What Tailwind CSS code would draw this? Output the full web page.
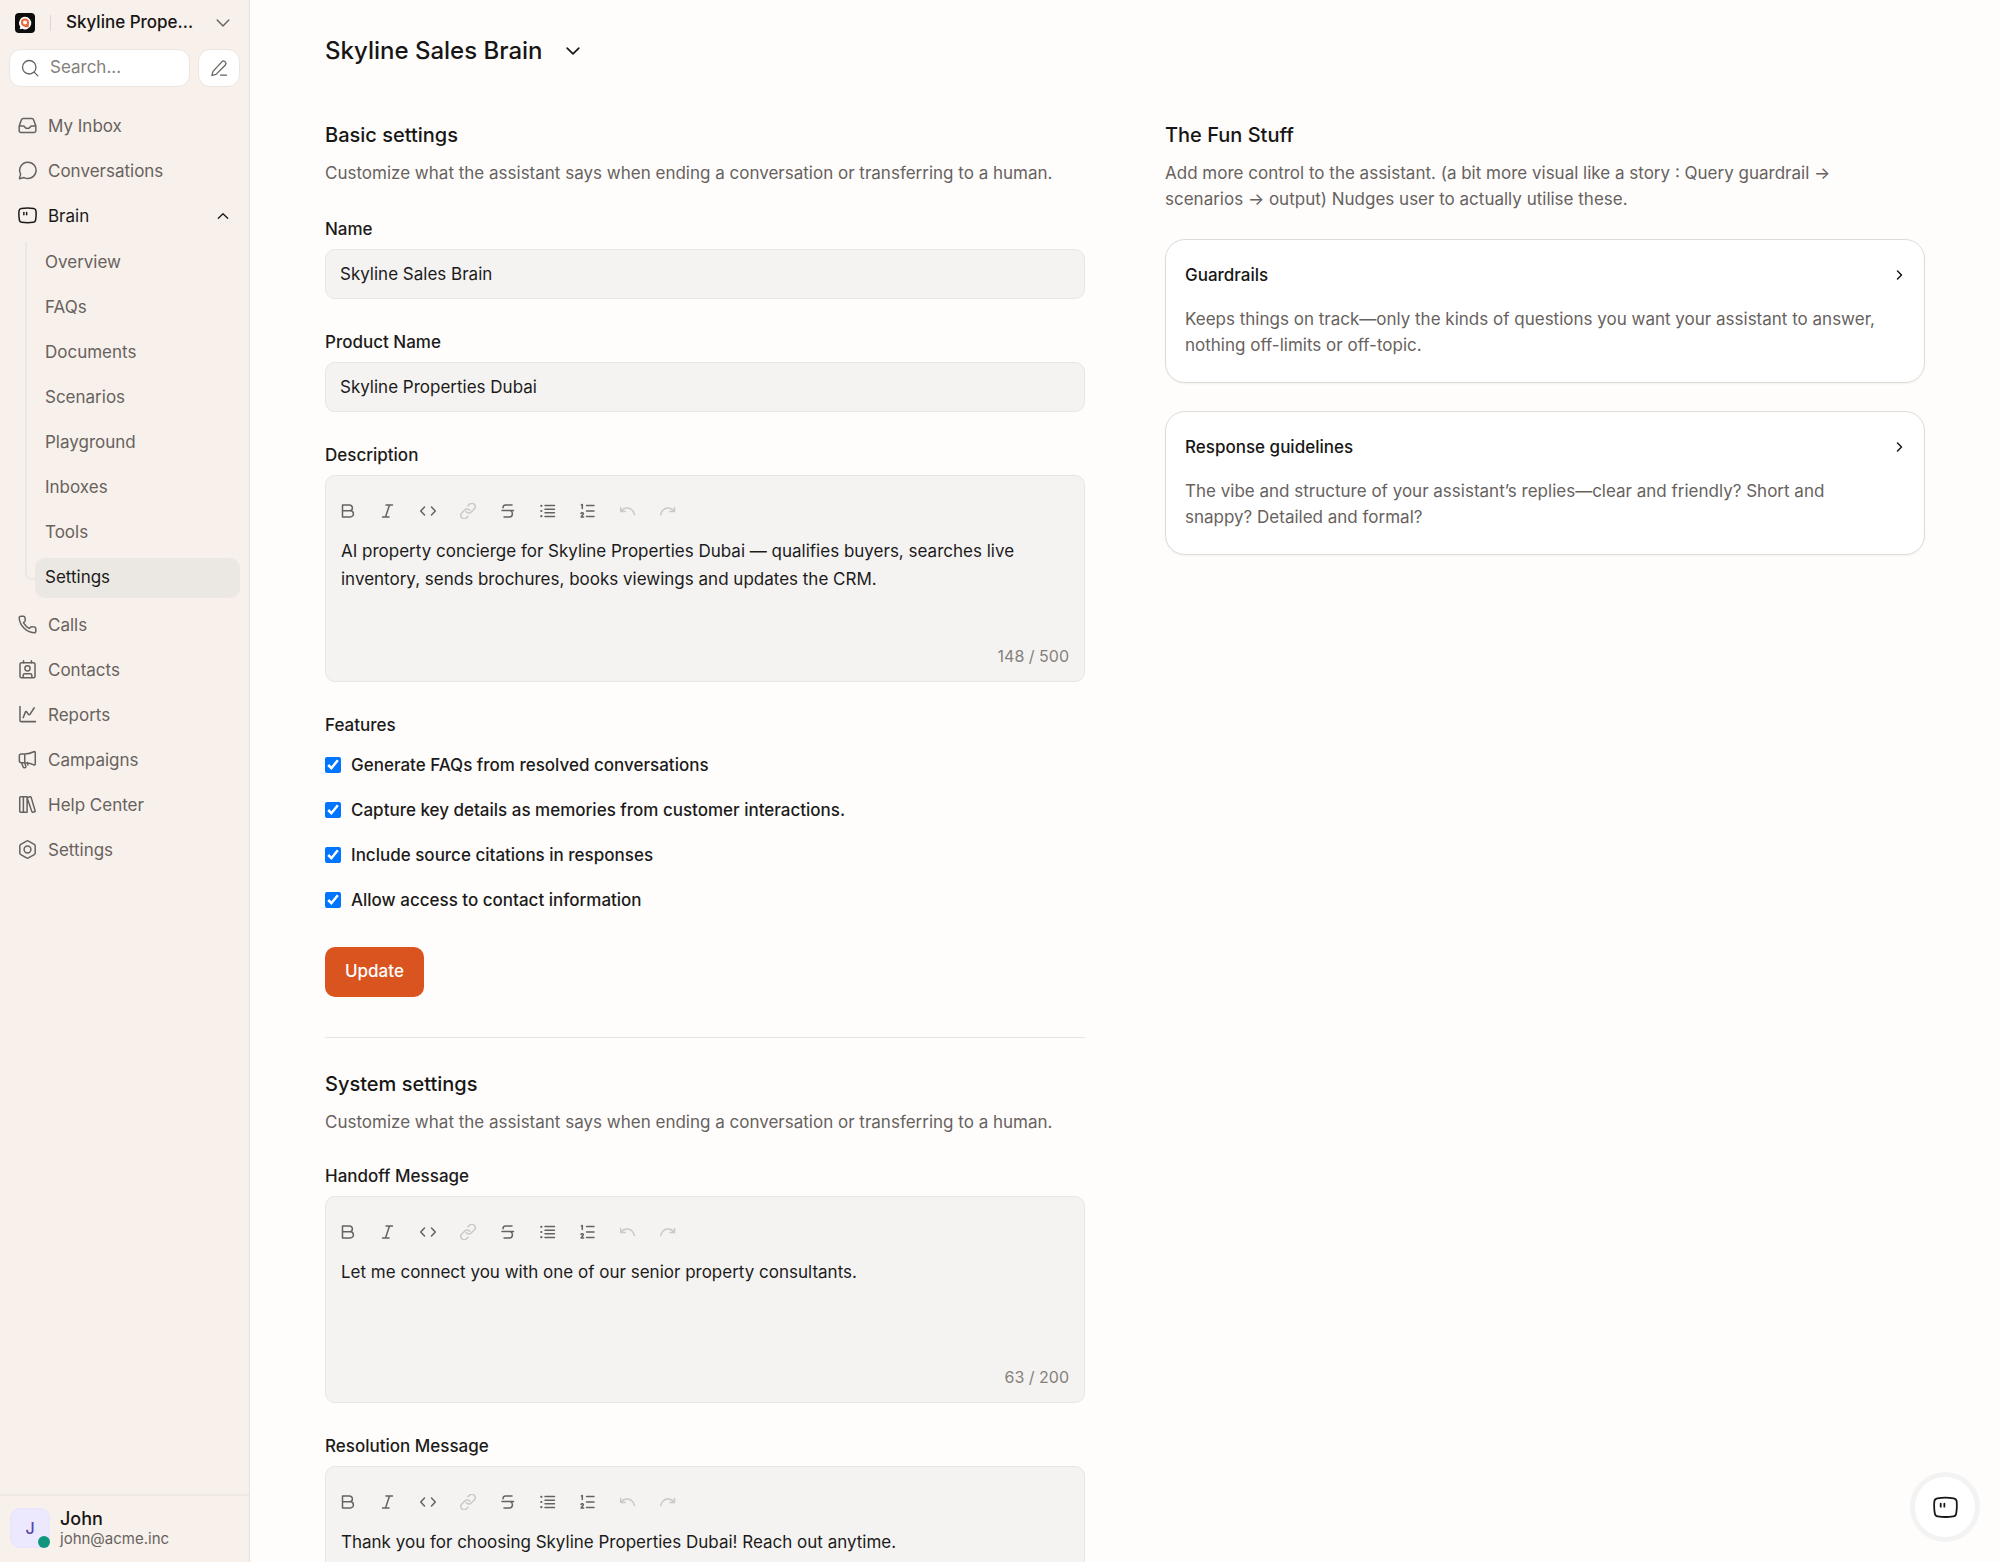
<!DOCTYPE html>
<html lang="en">
<head>
    <meta charset="UTF-8">
    <meta name="viewport" content="width=device-width, initial-scale=1.0">
    <title>Skyline Sales Brain - Settings</title>
    <script src="https://cdn.jsdelivr.net/npm/@tailwindcss/browser@4"></script>
</head>
<body class="flex h-screen overflow-hidden bg-[#fefdfc] font-['Inter',sans-serif] text-[17px] text-[#1c1b1a]">

    <!-- Icons -->
    <svg class="hidden" fill="none" stroke="currentColor" stroke-linecap="round" stroke-linejoin="round">
        <symbol id="i-down" viewBox="0 0 24 24"><path d="m5 8.500 7 7 7-7"/></symbol>
        <symbol id="i-up" viewBox="0 0 24 24"><path d="m5 15.500 7-7 7 7"/></symbol>
        <symbol id="i-right" viewBox="0 0 24 24"><path d="m9 4 8 8-8 8"/></symbol>
        <symbol id="i-search" viewBox="0 0 24 24"><circle cx="11" cy="11" r="9"/><path d="m17.500 17.500 5 5"/></symbol>
        <symbol id="i-pen" viewBox="0 0 24 24"><path d="M14 21.500h8M16 3.500a2.700 2.700 0 0 1 3.800 0l.7.7a2.700 2.700 0 0 1 0 3.800L8 20.500 2.500 22 4 16.500z"/></symbol>
        <symbol id="i-inbox" viewBox="0 0 24 24"><path d="M1.500 12.500h5.200c.9 0 1.300.5 1.700 1.300.6 1.200 1.900 1.900 3.600 1.900s3-.7 3.600-1.900c.4-.8.8-1.300 1.700-1.300h5.200M1.500 12.500v6a2.200 2.200 0 0 0 2.200 2.200h16.600a2.200 2.200 0 0 0 2.200-2.200v-6L19.800 5a2.500 2.500 0 0 0-2.400-1.700H6.600A2.500 2.500 0 0 0 4.200 5z"/></symbol>
        <symbol id="i-chat" viewBox="0 0 24 24"><path d="M12.500 1.500a10.300 10.300 0 1 1-4.800 19.400L1.800 22.300l1.500-5.700A10.300 10.300 0 0 1 12.500 1.500z"/></symbol>
        <symbol id="i-brain" viewBox="0 0 24 24"><path d="M4.200 3.200c5-.9 10.600-.9 15.600 0 1.700.3 2.700 1.200 2.900 2.900.4 3.900.2 8-.5 11.900-.3 1.600-1.200 2.400-2.800 2.600-4.900.7-9.900.7-14.800 0-1.600-.2-2.500-1-2.800-2.600C1.100 14.100.9 10 1.300 6.100c.2-1.700 1.200-2.600 2.900-2.900z"/><path d="M7.400 8.200v3M10.900 8.200v3"/></symbol>
        <symbol id="i-phone" viewBox="0 0 24 24"><path d="M22.500 17.300v3.100a2.100 2.100 0 0 1-2.300 2.100C10.400 21.700 2.300 13.600 1.500 3.800a2.100 2.100 0 0 1 2.100-2.300h3.100a2.100 2.100 0 0 1 2.100 1.800c.3 2 .7 3.300.2 4.100L7 9.900c2 3.300 3.800 5.100 7.100 7.100l2.500-2c.8-.5 2.100-.1 4.100.2a2.100 2.100 0 0 1 1.800 2.100z"/></symbol>
        <symbol id="i-contact" viewBox="0 0 24 24"><rect x="2.500" y="3.500" width="19" height="19" rx="2"/><path d="M7 1v2.500M17 1v2.500M6.500 22v-2.500a2 2 0 0 1 2-2h7a2 2 0 0 1 2 2V22"/><circle cx="12" cy="10.500" r="3.300"/></symbol>
        <symbol id="i-chart" viewBox="0 0 24 24"><path d="M2.500 2v17.500a1.500 1.500 0 0 0 1.500 1.500h18M6.500 16l2.800-7c.4-1 1.300-1 1.800-.2l2 3c.6.8 1.500.8 2 0L20.500 3.500"/></symbol>
        <symbol id="i-horn" viewBox="0 0 24 24"><path d="M8.500 5c4 0 8-1 11.500-2.800.8-.4 1.800 0 1.800 1v14.600c0 1-1 1.400-1.800 1C16.500 17 12.500 16 8.500 16M8.500 5H4a2.300 2.300 0 0 0-2.300 2.300v6.400A2.300 2.300 0 0 0 4 16h4.500zM4.500 16l2 5.500c.5 1.300 3.500 1.300 3.500-.5L8.500 16M12 15.800l.5 3"/></symbol>
        <symbol id="i-books" viewBox="0 0 24 24"><path d="M2.200 3.500c0-.8.4-1.200 1.200-1.200h8.100v19.400H3.400c-.8 0-1.200-.4-1.200-1.200zM6.800 2.300v19.400M11.500 3.500l3.800-1.200c.7-.2 1.100.1 1.300.7l5 16.800c.2.700 0 1.200-.7 1.400l-2 .6c-.7.2-1.200-.1-1.400-.8z"/></symbol>
        <symbol id="i-hex" viewBox="0 0 24 24"><path d="M10.800 1.400a2.400 2.400 0 0 1 2.400 0l7.300 4.200a2.400 2.400 0 0 1 1.200 2.100v8.600a2.400 2.400 0 0 1-1.200 2.100l-7.300 4.200a2.400 2.400 0 0 1-2.400 0l-7.300-4.200a2.400 2.400 0 0 1-1.200-2.100V7.700a2.400 2.400 0 0 1 1.200-2.100z"/><circle cx="12" cy="12" r="4.300"/></symbol>
        <symbol id="i-bold" viewBox="0 0 16 16"><path d="M2.500 2v12M2.500 2h7a2.900 2.900 0 0 1 0 5.800h-7M9.500 7.800h.8a3.100 3.100 0 0 1 0 6.200H2.500"/></symbol>
        <symbol id="i-italic" viewBox="0 0 16 16"><path d="M6 2h6.500M2.500 14h6.500M9.500 2 5.500 14"/></symbol>
        <symbol id="i-code" viewBox="0 0 16 16"><path d="M4.500 4 .7 8l3.800 4M11.500 4l3.800 4-3.800 4"/></symbol>
        <symbol id="i-link" viewBox="0 0 16 16"><path d="M6.300 8.700a3.300 3.300 0 0 0 4.900.3l3-3a3.300 3.300 0 0 0-4.700-4.700L8 2.800M9.700 7.300a3.300 3.300 0 0 0-4.900-.3l-3 3a3.300 3.300 0 0 0 4.700 4.700L8 13.200"/></symbol>
        <symbol id="i-strike" viewBox="0 0 16 16"><path d="M12 2H5.500A2.700 2.700 0 0 0 3 4.700M2 7.500h11.500M10.500 7.700c3 1.500 2.300 6.300-1 6.300H4"/></symbol>
        <symbol id="i-ul" viewBox="0 0 16 16"><path d="M5 2.500h9.500M5 6.200h9.500M5 9.800h9.500M5 13.500h9.500"/><path stroke-width="2.200" d="M1.300 2.800h.1M1.300 8h.1M1.300 13.200h.1"/></symbol>
        <symbol id="i-ol" viewBox="0 0 16 16"><path d="M6.500 2.500h7.500M6.500 8h7.500M6.500 13.500h7.500M2.300 5.500v-4l-.8.500M1 10.500c.3-1.200 2.600-1 2.300.4-.2 1-1.500 1.500-2.200 3.100h2.500"/></symbol>
        <symbol id="i-undo" viewBox="0 0 16 16"><path d="M.7 4.500v4h4.500M1.200 8C4.700 3.500 12 3.500 14.500 11.500"/></symbol>
        <symbol id="i-redo" viewBox="0 0 16 16"><path d="M14.500 4.500v4H10M14 8C10.500 3.500 3 3.500.7 11.500"/></symbol>
    </svg>

    <!-- Sidebar -->
    <aside class="flex w-[250px] shrink-0 flex-col border-r border-[#e4e1de] bg-[#f7f0eb] text-[#67625e]">
        <div class="flex h-[45px] items-center pl-[15px] pr-4">
            <svg class="size-5 shrink-0" viewBox="0 0 20 20">
                <rect width="20" height="20" rx="4" fill="#0d0c0c"/>
                <path d="M10 3.800a6.300 6.300 0 1 1-2.700 12l-2.600.4.600-2.400A6.300 6.300 0 0 1 10 3.800z" fill="#fff"/>
                <circle cx="10" cy="9.500" r="3" fill="none" stroke="#e8693a" stroke-width="2"/>
                <path d="M9.500 13.500h3.500v-4" fill="none" stroke="#e8693a" stroke-width="1.500"/>
            </svg>
            <span class="mx-[15px] h-4 w-px bg-[#dcd7d2]"></span>
            <button class="flex min-w-0 flex-1 items-center justify-between font-medium text-[#171615]">
                <span>Skyline Prope...</span>
                <svg class="size-5 text-[#67625e]" stroke-width="1.700"><use href="#i-down"/></svg>
            </button>
        </div>
        <div class="flex gap-2 px-[9px] pt-1">
            <label class="flex h-[38px] min-w-0 flex-1 items-center gap-[11px] rounded-xl border border-[#ebe6e1] bg-white pl-[11px]">
                <svg class="size-[18px] shrink-0" stroke-width="1.700"><use href="#i-search"/></svg>
                <input type="search" placeholder="Search..." aria-label="Search" class="w-full min-w-0 outline-none placeholder:text-[#85807b]">
            </label>
            <button aria-label="Compose" class="flex h-[38px] w-[42px] items-center justify-center rounded-xl border border-[#ebe6e1] bg-white">
                <svg class="size-[18px]" stroke-width="1.700"><use href="#i-pen"/></svg>
            </button>
        </div>

        <nav class="flex flex-1 flex-col gap-[5px] px-[9px] pt-5">
            <a href="#" class="flex h-10 items-center gap-[11px] px-[9px]"><svg class="mb-[3px] size-[19px]" stroke-width="1.900"><use href="#i-inbox"/></svg>My Inbox</a>
            <a href="#" class="flex h-10 items-center gap-[11px] px-[9px]"><svg class="mb-[3px] size-[19px]" stroke-width="1.900"><use href="#i-chat"/></svg>Conversations</a>
            <a href="#" class="flex h-10 items-center gap-[11px] px-[9px] text-[#1c1b1a]"><svg class="mb-[3px] size-[19px]" stroke-width="1.900"><use href="#i-brain"/></svg>Brain<svg class="mb-[3px] ml-auto size-4" stroke-width="2"><use href="#i-up"/></svg></a>
            <div class="relative flex flex-col gap-[5px] pb-[3px] pl-[26px] pt-px">
                <span class="absolute left-[16px] top-0 h-[338px] w-[10px] rounded-bl-md border-b-2 border-l-2 border-[#ebe7e2]"></span>
                <a href="#" class="flex h-10 items-center px-[10px]">Overview</a>
                <a href="#" class="flex h-10 items-center px-[10px]">FAQs</a>
                <a href="#" class="flex h-10 items-center px-[10px]">Documents</a>
                <a href="#" class="flex h-10 items-center px-[10px]">Scenarios</a>
                <a href="#" class="flex h-10 items-center px-[10px]">Playground</a>
                <a href="#" class="flex h-10 items-center px-[10px]">Inboxes</a>
                <a href="#" class="flex h-10 items-center px-[10px]">Tools</a>
                <a href="#" class="flex h-10 items-center rounded-[10px] bg-[#ebe7e2] px-[10px] text-[#1c1b1a]">Settings</a>
            </div>
            <a href="#" class="flex h-10 items-center gap-[11px] px-[9px]"><svg class="mb-[3px] size-[19px]" stroke-width="1.900"><use href="#i-phone"/></svg>Calls</a>
            <a href="#" class="flex h-10 items-center gap-[11px] px-[9px]"><svg class="mb-[3px] size-[19px]" stroke-width="1.900"><use href="#i-contact"/></svg>Contacts</a>
            <a href="#" class="flex h-10 items-center gap-[11px] px-[9px]"><svg class="mb-[3px] size-[19px]" stroke-width="1.900"><use href="#i-chart"/></svg>Reports</a>
            <a href="#" class="flex h-10 items-center gap-[11px] px-[9px]"><svg class="mb-[3px] size-[19px]" stroke-width="1.900"><use href="#i-horn"/></svg>Campaigns</a>
            <a href="#" class="flex h-10 items-center gap-[11px] px-[9px]"><svg class="mb-[3px] size-[19px]" stroke-width="1.900"><use href="#i-books"/></svg>Help Center</a>
            <a href="#" class="flex h-10 items-center gap-[11px] px-[9px]"><svg class="mb-[3px] size-[19px]" stroke-width="1.900"><use href="#i-hex"/></svg>Settings</a>
        </nav>

        <button class="flex items-center gap-[10px] border-t-2 border-[#eee8e3] px-[10px] pb-[14px] pt-3 text-left">
            <span class="relative flex size-10 items-center justify-center rounded-[10px] border border-[#e9e4fb] bg-[#ece9fe] text-base font-medium text-[#5746af]">J
                <span class="absolute -bottom-px -right-px size-3 rounded-full bg-[#12957f]"></span>
            </span>
            <span>
                <span class="block text-lg font-medium leading-[21px] text-[#171615]">John</span>
                <span class="block text-[15px] leading-[19px]">john@acme.inc</span>
            </span>
        </button>
    </aside>

    <!-- Content -->
    <main class="min-w-0 flex-1 overflow-y-auto px-[75px] [scrollbar-width:none]">
        <header class="flex h-[102px] items-center">
            <button class="flex items-center gap-5 text-2xl font-medium text-[#171615]">
                Skyline Sales Brain
                <svg class="size-5" stroke-width="2"><use href="#i-down"/></svg>
            </button>
        </header>

        <div class="grid grid-cols-2 gap-20 pt-[18px]">
            <div>
                <h2 class="text-xl font-medium leading-[30px] text-[#171615]">Basic settings</h2>
                <p class="mt-[10px] leading-[26px] text-[#67625e]">Customize what the assistant says when ending a conversation or transferring to a human.</p>

                <form class="mt-[30px]" onsubmit="return false">
                    <label for="name" class="block font-medium leading-[26px]">Name</label>
                    <input id="name" type="text" value="Skyline Sales Brain" class="mt-[7px] block h-[50px] w-full rounded-[10px] border border-[#e8e6e4] bg-[#f4f3f2] px-[14px] outline-none">

                    <label for="product" class="mt-[30px] block font-medium leading-[26px]">Product Name</label>
                    <input id="product" type="text" value="Skyline Properties Dubai" class="mt-[7px] block h-[50px] w-full rounded-[10px] border border-[#e8e6e4] bg-[#f4f3f2] px-[14px] outline-none">

                    <label for="description" class="mt-[30px] block font-medium leading-[26px]">Description</label>
                    <div class="mt-[7px] h-[207px] rounded-[10px] border border-[#e8e6e4] bg-[#f4f3f2] pt-[19px]">
                        <div data-toolbar class="flex px-[5px] text-[#67625e]"></div>
                        <textarea id="description" class="mt-[10px] block h-[90px] w-full resize-none px-[15px] leading-7 outline-none">AI property concierge for Skyline Properties Dubai — qualifies buyers, searches live inventory, sends brochures, books viewings and updates the CRM.</textarea>
                        <p class="mt-[19px] px-[15px] text-right text-base leading-5 text-[#85807b]">148 / 500</p>
                    </div>

                    <fieldset class="mt-[30px]">
                        <legend class="font-medium leading-[26px]">Features</legend>
                        <div class="mt-[14px] flex flex-col items-start gap-[19px] font-medium leading-[26px]">
                            <label class="flex items-center gap-[10px]"><input type="checkbox" checked class="size-4 accent-[#0075ff]">Generate FAQs from resolved conversations</label>
                            <label class="flex items-center gap-[10px]"><input type="checkbox" checked class="size-4 accent-[#0075ff]">Capture key details as memories from customer interactions.</label>
                            <label class="flex items-center gap-[10px]"><input type="checkbox" checked class="size-4 accent-[#0075ff]">Include source citations in responses</label>
                            <label class="flex items-center gap-[10px]"><input type="checkbox" checked class="size-4 accent-[#0075ff]">Allow access to contact information</label>
                        </div>
                    </fieldset>

                    <button type="submit" class="mt-[34px] h-[50px] rounded-[10px] bg-[#da541f] px-5 font-medium text-white">Update</button>
                </form>

                <section class="mt-10 border-t border-[#e8e6e4] pt-[31px]">
                    <h2 class="text-xl font-medium leading-[30px] text-[#171615]">System settings</h2>
                    <p class="mt-[10px] leading-[26px] text-[#67625e]">Customize what the assistant says when ending a conversation or transferring to a human.</p>

                    <label for="handoff" class="mt-7 block font-medium leading-[26px]">Handoff Message</label>
                    <div class="mt-[7px] h-[207px] rounded-[10px] border border-[#e8e6e4] bg-[#f4f3f2] pt-[19px]">
                        <div data-toolbar class="flex px-[5px] text-[#67625e]"></div>
                        <textarea id="handoff" class="mt-[10px] block h-[90px] w-full resize-none px-[15px] leading-7 outline-none">Let me connect you with one of our senior property consultants.</textarea>
                        <p class="mt-[19px] px-[15px] text-right text-base leading-5 text-[#85807b]">63 / 200</p>
                    </div>

                    <label for="resolution" class="mt-[30px] block font-medium leading-[26px]">Resolution Message</label>
                    <div class="mt-[7px] h-[207px] rounded-[10px] border border-[#e8e6e4] bg-[#f4f3f2] pt-[19px]">
                        <div data-toolbar class="flex px-[5px] text-[#67625e]"></div>
                        <textarea id="resolution" class="mt-[10px] block h-[90px] w-full resize-none px-[15px] leading-7 outline-none">Thank you for choosing Skyline Properties Dubai! Reach out anytime.</textarea>
                        <p class="mt-[19px] px-[15px] text-right text-base leading-5 text-[#85807b]">67 / 200</p>
                    </div>
                </section>
            </div>

            <div>
                <h2 class="text-xl font-medium leading-[30px] text-[#171615]">The Fun Stuff</h2>
                <p class="mt-[10px] pr-10 leading-[26px] text-[#67625e]">Add more control to the assistant. (a bit more visual like a story : Query guardrail → scenarios → output) Nudges user to actually utilise these.</p>

                <div class="mt-[27px] flex flex-col gap-7">
                    <a href="#" class="block rounded-[20px] border border-[#dfdcd8] bg-white px-[19px] pb-6 pt-[22px] shadow-xs">
                        <span class="flex items-center justify-between font-medium leading-[26px] text-[#171615]">Guardrails<svg class="size-3" stroke-width="3"><use href="#i-right"/></svg></span>
                        <span class="mt-[18px] block pr-5 leading-[26px] text-[#67625e]">Keeps things on track—only the kinds of questions you want your assistant to answer, nothing off-limits or off-topic.</span>
                    </a>
                    <a href="#" class="block rounded-[20px] border border-[#dfdcd8] bg-white px-[19px] pb-6 pt-[22px] shadow-xs">
                        <span class="flex items-center justify-between font-medium leading-[26px] text-[#171615]">Response guidelines<svg class="size-3" stroke-width="3"><use href="#i-right"/></svg></span>
                        <span class="mt-[18px] block pr-5 leading-[26px] text-[#67625e]">The vibe and structure of your assistant’s replies—clear and friendly? Short and snappy? Detailed and formal?</span>
                    </a>
                </div>
            </div>
        </div>
    </main>

    <!-- Floating assistant button -->
    <button aria-label="Open assistant" class="fixed bottom-5 right-5 flex size-[70px] items-center justify-center rounded-full border-[5px] border-[#f4f3f3] bg-white text-[#171615]">
        <svg class="size-[25px]" stroke-width="1.700"><use href="#i-brain"/></svg>
    </button>

    <script>
        const tools = [
            ['i-bold', 'Bold'],
            ['i-italic', 'Italic'],
            ['i-code', 'Code'],
            ['i-link', 'Link'],
            ['i-strike', 'Strikethrough'],
            ['i-ul', 'Bullet list'],
            ['i-ol', 'Numbered list'],
            ['i-undo', 'Undo'],
            ['i-redo', 'Redo'],
        ];
        const disabled = ['i-link', 'i-undo', 'i-redo'];

        document.querySelectorAll('[data-toolbar]').forEach(bar => {
            bar.innerHTML = tools.map(([icon, label]) => `
                <button type="button" aria-label="${label}" ${disabled.includes(icon) ? 'disabled' : ''} class="flex h-8 w-10 items-center pl-[9px] disabled:text-[#cbc8c5]">
                    <svg class="size-4" stroke-width="1.500"><use href="#${icon}"/></svg>
                </button>
            `).join('');
        });

        document.querySelectorAll('svg:has(> use)').forEach(svg => {
            svg.setAttribute('fill', 'none');
            svg.setAttribute('stroke', 'currentColor');
            svg.setAttribute('stroke-linecap', 'round');
            svg.setAttribute('stroke-linejoin', 'round');
        });
    </script>

</body>
</html>
